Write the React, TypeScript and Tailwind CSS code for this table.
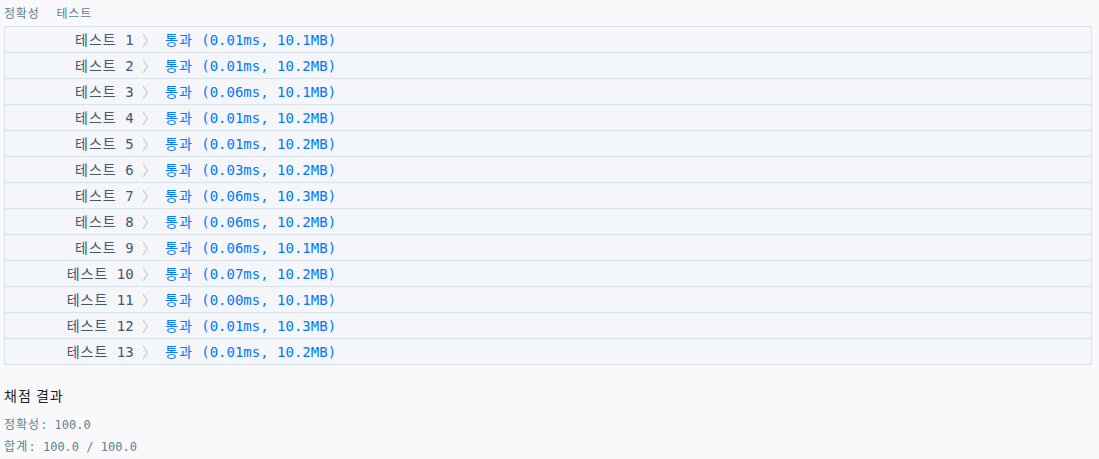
import React from 'react';

const results = [
    { no: 1, time: '0.01ms', mem: '10.1MB' },
    { no: 2, time: '0.01ms', mem: '10.2MB' },
    { no: 3, time: '0.06ms', mem: '10.1MB' },
    { no: 4, time: '0.01ms', mem: '10.2MB' },
    { no: 5, time: '0.01ms', mem: '10.2MB' },
    { no: 6, time: '0.03ms', mem: '10.2MB' },
    { no: 7, time: '0.06ms', mem: '10.3MB' },
    { no: 8, time: '0.06ms', mem: '10.2MB' },
    { no: 9, time: '0.06ms', mem: '10.1MB' },
    { no: 10, time: '0.07ms', mem: '10.2MB' },
    { no: 11, time: '0.00ms', mem: '10.1MB' },
    { no: 12, time: '0.01ms', mem: '10.3MB' },
    { no: 13, time: '0.01ms', mem: '10.2MB' },
];

const mono = 'font-["DejaVu_Sans_Mono","Noto_Sans_CJK_KR",monospace]';

export default function App() {
    return (
        <div className={`min-h-[459px] w-full bg-[#f9f9fc] ${mono}`}>
            {/* tab header */}
            <div className='flex h-[26px] items-center gap-[17px] pl-[4px] text-[12px] tracking-[0.8px] text-[#5f7f90] font-["Noto_Sans_CJK_KR",sans-serif]'>
                <span>정확성</span>
                <span>테스트</span>
            </div>

            {/* test results */}
            <div className="ml-[4px] w-[1088px] border border-[#d7e2eb] bg-[#f5f6fa]">
                {results.map((r, idx) => (
                    <div
                        key={r.no}
                        className={`flex items-center text-[14px] leading-none ${idx > 0 ? 'h-[26px] border-t border-[#d7e2eb]' : 'h-[25px]'}`}
                    >
                        <div className="w-[151px] whitespace-pre text-right text-[#44576c]">
                            <span className="tracking-[1px]">테스트</span>{' '}{r.no}{' '}<span className="text-[#c2c8cf]">〉</span>
                        </div>
                        <div className="whitespace-pre pl-[9px] text-[#0078ff]">
                            <span className="tracking-[1px]">통과</span> ({r.time}, {r.mem})
                        </div>
                    </div>
                ))}
            </div>

            {/* score */}
            <div className="pl-[4px] pt-[21px]">
                <div className='text-[14px] leading-[18px] tracking-[1px] text-[#1e2126] font-["Noto_Sans_CJK_KR",sans-serif]'>채점 결과</div>
                <div className="mt-[10px] text-[12px] leading-[22px] text-[#5f7f90]">
                    <div><span className="tracking-[1px]">정확성</span>: 100.0</div>
                    <div><span className="tracking-[1.2px]">합계</span>: 100.0 / 100.0</div>
                </div>
            </div>
        </div>
    );
}
